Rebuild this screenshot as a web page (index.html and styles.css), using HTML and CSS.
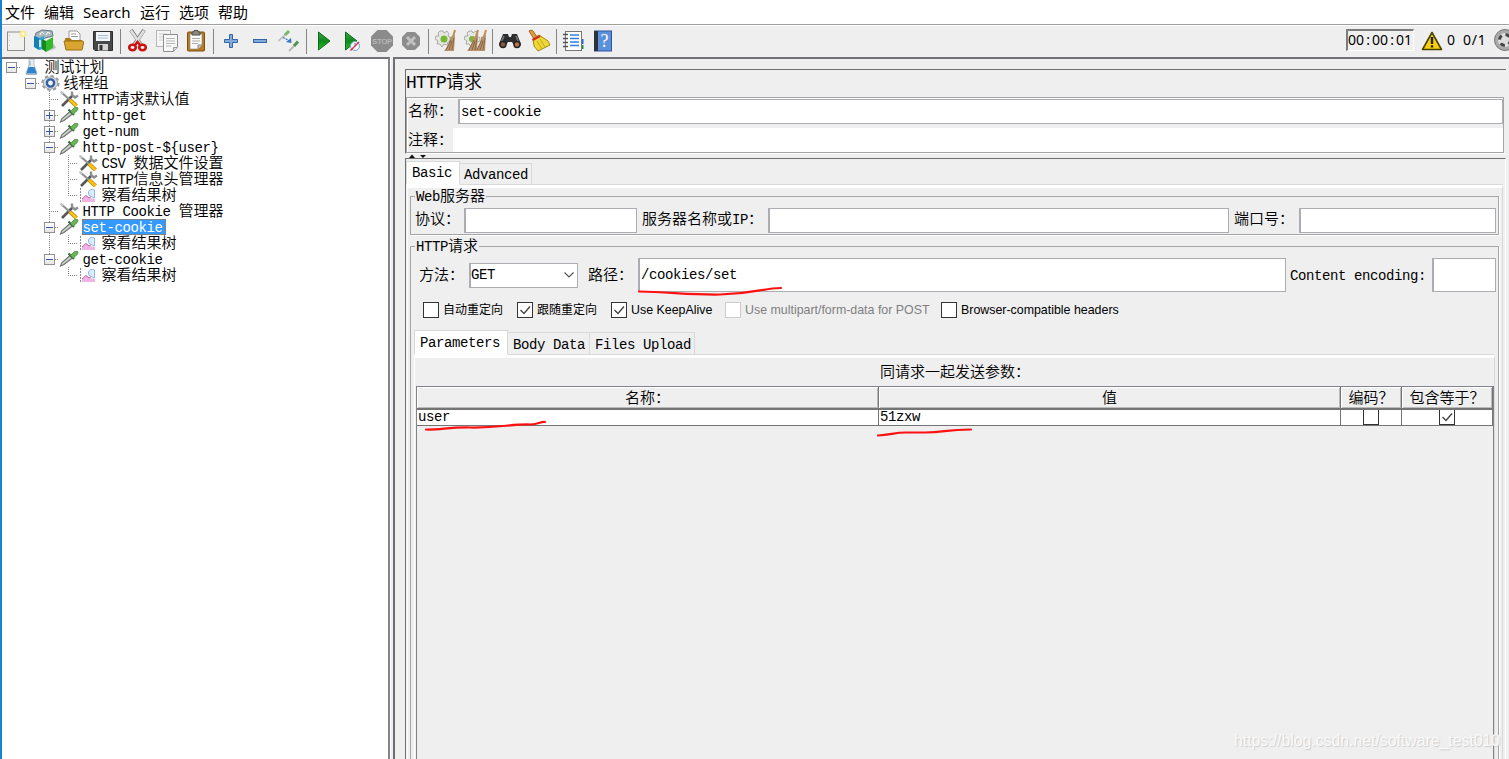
FILE: index.html
```html
<!DOCTYPE html>
<html lang="zh-CN">
<head>
    <meta charset="UTF-8">
    <meta name="viewport" content="width=device-width, initial-scale=1.0">
    <title>Apache JMeter</title>
    <link rel="stylesheet" href="styles.css">
</head>
<body>
    <!-- Shared icons for the tree -->
    <svg class="defs" width="0" height="0">
        <defs>
            <linearGradient id="green" x1="0" y1="0" x2="0" y2="1">
                <stop offset="0" stop-color="#3fa04a"/>
                <stop offset="0.5" stop-color="#0f8a1c"/>
                <stop offset="1" stop-color="#27c025"/>
            </linearGradient>
            <symbol id="dropper" viewBox="0 0 20 16">
                <path d="M1.500 15 L3 11.500 L11 4.500 L13.500 7 L5 13.500 Z" fill="#c9cfcb" stroke="#6d726e" stroke-width="1.1"/>
                <path d="M9.500 2.500 L15 8" stroke="#3d6a3d" stroke-width="2.2"/>
                <path d="M11.500 4.500 L15.500 0.500 Q19 -1 19 2 Q19 3 14 7.500 Z" fill="#6cb35c" stroke="#3f8a3a" stroke-width="0.8"/>
            </symbol>
            <symbol id="tools" viewBox="0 0 20 16">
                <path d="M3 15 L14 4" stroke="#55585a" stroke-width="2.6"/>
                <path d="M13 0.500 L13 4 L16 6.500 L19 4.500" stroke="#8c8f91" stroke-width="2.4" fill="none"/>
                <path d="M2 1 L11 9" stroke="#8e9193" stroke-width="2.2"/>
                <path d="M0.500 0 L5 2 L3 4 Z" fill="#c4c6c7"/>
                <path d="M11 9 L17.500 15" stroke="#b98a00" stroke-width="4"/>
                <path d="M11 9 L17.500 15" stroke="#f6c21b" stroke-width="2.6"/>
            </symbol>
            <symbol id="chart" viewBox="0 0 20 16">
                <path d="M2.500 1 V15" stroke="#8b8b8b" stroke-width="1" stroke-dasharray="2 1"/>
                <path d="M4 15 V12 L8 8 L12 11 L17 12 V15 Z" fill="#f0b4e2"/>
                <path d="M4 12 L8 8.500 L11 11 L13 10" stroke="#c864b4" fill="none"/>
                <path d="M16.500 3 Q12 1 10.500 5 Q10 9 13 9.500 L16.500 11 Z" fill="#dcecff" stroke="#7da5dc" stroke-width="0.8"/>
            </symbol>
            <symbol id="flask" viewBox="0 0 20 16">
                <path d="M8 0 H13 V6 L16 14 Q16 15 15 15 H6 Q5 15 5 14 L8 6 Z" fill="#e5eef5" stroke="#a5b5c2" stroke-width="0.8"/>
                <path d="M7.500 8 H13.500 L15.500 14 H5.500 Z" fill="#2e83cf"/>
                <path d="M9 2 V7" stroke="#7fa6c4"/>
                <path d="M5 15 H16" stroke="#5a89b0"/>
            </symbol>
            <symbol id="gear" viewBox="0 0 20 16">
                <ellipse cx="10.500" cy="8" rx="8" ry="6.800" fill="none" stroke="#9a9fa4" stroke-width="2.400" stroke-dasharray="3.200 2.600"/>
                <ellipse cx="10.500" cy="8" rx="7.200" ry="6.200" fill="#d6d9db" stroke="#93989c" stroke-width="0.8"/>
                <circle cx="10.500" cy="8" r="3.600" fill="#f4f7fa" stroke="#345fa5" stroke-width="2.400"/>
            </symbol>
            <symbol id="broom" viewBox="0 0 12 24">
                <path d="M11 1 L8 11" stroke="#c58b52" stroke-width="2"/>
                <path d="M6 8 L11 6 L10 22 L0 22 Q5 16 6 8 Z" fill="#b8926c"/>
                <path d="M7 11 L2 21 M8 12 L5 21 M10 9 L8 21" stroke="#7f5a38" stroke-width="0.8"/>
            </symbol>
            <symbol id="cog" viewBox="0 0 16 18">
                <path d="M5 1 H8 L9 3 L12 1 L14 4 L13 6 L16 8 V11 L13 12 L12 15 L9 14 L7 17 L5 14 L2 14 L3 11 L0 9 L1 6 L4 6 L3 3 Z" fill="#e6e6e2" stroke="#a3a39e" stroke-width="0.9"/>
            </symbol>
        </defs>
    </svg>

    <div class="window">
        <!-- Menu -->
        <nav class="menubar">
            <span>文件</span><span>编辑</span><span>Search</span><span>运行</span><span>选项</span><span>帮助</span>
        </nav>

        <!-- Toolbar -->
        <div class="toolbar">
            <span class="tool"><svg width="24" height="24" viewBox="0 0 24 24">
                <rect x="3.500" y="3" width="17" height="18.500" fill="#f1f1ef" stroke="#8d8f8a"/>
                <path d="M5.500 6 V20" stroke="#c4c4c4" stroke-dasharray="1 4"/>
                <circle cx="19" cy="5" r="3.500" fill="#f7e98b"/><circle cx="19" cy="5" r="1.500" fill="#fffdf0"/>
            </svg></span>
            <span class="tool"><svg width="24" height="24" viewBox="0 0 24 24">
                <path d="M3 4 L9 1 L19 2 L20 7 L8 10 L2 8 Z" fill="#a9b8bd" stroke="#65777e"/>
                <path d="M7 6 Q8 1 11 5 M13 6 Q15 1 17 5" stroke="#fff" fill="none"/>
                <path d="M1 7 L6 9 V21 L1 18 Z" fill="#1580b5"/>
                <path d="M6 9 L11 7 V20 L6 21 Z" fill="#34a5d8"/>
                <path d="M7 11 V18" stroke="#fff" stroke-width="1.500"/>
                <path d="M9 10 L13 12 V23 L9 20 Z" fill="#138a1e"/>
                <path d="M13 12 L20 8 V19 L13 23 Z" fill="#32ba2b"/>
                <path d="M20 14 L23 19 L14 23 L20 19 Z" fill="#bbb"/>
            </svg></span>
            <span class="tool"><svg width="24" height="24" viewBox="0 0 24 24">
                <path d="M7 2 H15 L18 5 V14 H7 Z" fill="#fff" stroke="#999"/>
                <path d="M9 5 H14 M9 7.500 H16" stroke="#999"/>
                <path d="M3 9 H8 L10 11 H20 V20 H4 Z" fill="#a97a17"/>
                <path d="M2 12 H20 Q22 12 21.500 14 L20 21 H4 Z" fill="#d9a531" stroke="#9c7015"/>
            </svg></span>
            <span class="tool"><svg width="24" height="24" viewBox="0 0 24 24">
                <path d="M2.500 2.500 H21.500 V21.500 H4 L2.500 20 Z" fill="#46484a" stroke="#2c2d2e"/>
                <rect x="5" y="3" width="14" height="9" fill="#f4f7fa"/>
                <path d="M7 6.500 H17 M7 9 H17" stroke="#a9bccf"/>
                <rect x="7" y="15" width="10" height="6.500" fill="#d5d5d5"/>
                <rect x="8.500" y="16" width="3" height="5" fill="#333"/>
            </svg></span>
            <i class="sep"></i>
            <span class="tool"><svg width="24" height="24" viewBox="0 0 24 24">
                <path d="M5 1 L15 16 M18 1 L8 16" stroke="#858585" stroke-width="4"/>
                <path d="M5 1.500 L14.500 15.500 M18 1.500 L8.500 15.500" stroke="#e1e1e1" stroke-width="2.400"/>
                <ellipse cx="6.500" cy="18.500" rx="3.300" ry="2.700" fill="none" stroke="#cc1111" stroke-width="2.600"/>
                <ellipse cx="16.500" cy="18.500" rx="3.300" ry="2.700" fill="none" stroke="#cc1111" stroke-width="2.600"/>
                <path d="M9 16 L11.500 13 L14 16" stroke="#cc1111" stroke-width="2.500" fill="none"/>
            </svg></span>
            <span class="tool"><svg width="24" height="24" viewBox="0 0 24 24">
                <rect x="1.500" y="1.500" width="14" height="16" fill="#f5f5f5" stroke="#b6b6b6"/>
                <path d="M4 5 H12 M4 8 H8 M4 11 H8" stroke="#ccc"/>
                <path d="M8.500 5.500 H22.500 V18 L18.500 22.500 H8.500 Z" fill="#f8f8f8" stroke="#8e8e8e"/>
                <path d="M11 9.500 H20 M11 12 H20 M11 14.500 H20 M11 17 H16" stroke="#b5b5b5"/>
                <path d="M18.500 22 V18.500 H22" fill="#ddd" stroke="#999"/>
            </svg></span>
            <span class="tool"><svg width="24" height="24" viewBox="0 0 24 24">
                <rect x="3.500" y="3" width="17" height="19" rx="1" fill="#b77c22" stroke="#7f500c"/>
                <path d="M6 5 H18 V16 L14 20 H6 Z" fill="#fafafa" stroke="#888" stroke-width="0.6"/>
                <path d="M8 9.500 H16 M8 12 H16 M8 14.500 H14" stroke="#aaa"/>
                <path d="M8 6 V3 H10 V1.500 H14 V3 H16 V6 Z" fill="#8b8c85" stroke="#4f504c"/>
                <path d="M14 20 V16 H18" fill="#ccc" stroke="#888"/>
            </svg></span>
            <i class="sep"></i>
            <span class="tool"><svg width="24" height="24" viewBox="0 0 24 24">
                <path d="M10.500 5.500 H13.500 V10.500 H18.500 V13.500 H13.500 V18.500 H10.500 V13.500 H5.500 V10.500 H10.500 Z" fill="#82abd9" stroke="#3465a4"/>
            </svg></span>
            <span class="tool"><svg width="24" height="24" viewBox="0 0 24 24">
                <rect x="5.500" y="10.500" width="13" height="3" fill="#82abd9" stroke="#3465a4"/>
            </svg></span>
            <span class="tool"><svg width="24" height="24" viewBox="0 0 24 24">
                <path d="M1.500 12 L9 5" stroke="#bfc4bf" stroke-width="1.800"/>
                <path d="M8 6 L12 2" stroke="#79b46d" stroke-width="3"/>
                <path d="M12 22 L18 16" stroke="#b5b9b5" stroke-width="1.800"/>
                <path d="M17 17 L21 12.500" stroke="#559450" stroke-width="3"/>
                <path d="M6 8.500 L11 11" stroke="#3a76c9" stroke-width="1.200" stroke-dasharray="2 1"/>
                <path d="M9 13 L14 9 L14.500 14 Z" fill="#2f75d2"/>
            </svg></span>
            <i class="sep"></i>
            <span class="tool"><svg width="24" height="24" viewBox="0 0 24 24">
                <path d="M6.500 3 L18 12 L6.500 21 Z" fill="url(#green)" stroke="#0c6d18"/>
            </svg></span>
            <span class="tool"><svg width="24" height="24" viewBox="0 0 24 24">
                <path d="M4.500 3 L16 12 L4.500 21 Z" fill="url(#green)" stroke="#0c6d18"/>
                <circle cx="14" cy="17" r="4.500" fill="#f3f7ff" stroke="#7fa3d0"/>
                <path d="M14 14 V17" stroke="#5f86bd"/>
                <path d="M9.500 21.500 L18 13" stroke="#d13a3a" stroke-width="1.400"/>
            </svg></span>
            <span class="tool"><svg width="24" height="24" viewBox="0 0 24 24">
                <path d="M7.500 1 H16.500 L23 7.500 V16.500 L16.500 23 H7.500 L1 16.500 V7.500 Z" fill="#8b8b8b"/>
                <text x="12" y="15" text-anchor="middle" class="stop-text">STOP</text>
            </svg></span>
            <span class="tool"><svg width="24" height="24" viewBox="0 0 24 24">
                <path d="M8 3 H16 L21 8 V16 L16 21 H8 L3 16 V8 Z" fill="#8d8d8d"/>
                <path d="M8 8 L16 16 M16 8 L8 16" stroke="#c0c0c0" stroke-width="3"/>
            </svg></span>
            <i class="sep"></i>
            <span class="tool"><svg width="24" height="24" viewBox="0 0 24 24">
                <use href="#cog" x="1" y="1" width="16" height="18"/>
                <circle cx="10" cy="10" r="3.500" fill="#75b935"/>
                <use href="#broom" x="10" y="0" width="12" height="24"/>
            </svg></span>
            <span class="tool"><svg width="24" height="24" viewBox="0 0 24 24">
                <use href="#cog" x="1" y="1" width="16" height="18"/>
                <circle cx="9" cy="10" r="3" fill="#75b935"/>
                <use href="#broom" x="4" y="0" width="12" height="24"/>
                <use href="#broom" x="12" y="0" width="12" height="24"/>
            </svg></span>
            <i class="sep"></i>
            <span class="tool"><svg width="24" height="24" viewBox="0 0 24 24">
                <path d="M5 5 H10 L11 8 H13 L14 5 H19 L23 15 Q22 20 17 18 L14 13 H10 L7 18 Q2 20 1 15 Z" fill="#2d2e2f"/>
                <path d="M6 7 L3 14 M18 7 L20 12" stroke="#77797b" stroke-width="1.500"/>
                <circle cx="5" cy="15.500" r="3" fill="#865b43" stroke="#222" stroke-width="1.400"/>
                <circle cx="19" cy="15.500" r="3" fill="#b56f45" stroke="#222" stroke-width="1.400"/>
            </svg></span>
            <span class="tool"><svg width="24" height="24" viewBox="0 0 24 24">
                <path d="M2 2 Q4 0 6 2 L10 8 L7 10 Z" fill="#df9c48" stroke="#a96617"/>
                <path d="M6 10 L12 6 L21 12 L23 16 L11 22 L7 17 Z" fill="#edd83a" stroke="#a98a0c"/>
                <path d="M5.500 11 L13 7" stroke="#d02a20" stroke-width="2.400"/>
                <path d="M10 12 L15 20 M13 10 L18 18" stroke="#c5a718"/>
            </svg></span>
            <i class="sep narrow"></i>
            <span class="tool"><svg width="24" height="24" viewBox="0 0 24 24">
                <path d="M20 10 H22.500 V15 H20 Z" fill="#2566cf"/><path d="M20 16 H22.500 V20 H20 Z" fill="#239143"/>
                <rect x="4.500" y="2.500" width="16" height="19" fill="#fff" stroke="#777"/>
                <path d="M2 5.500 H7 M2 9.500 H7 M2 13.500 H7 M2 17.500 H7" stroke="#555" stroke-width="1.500"/>
                <path d="M9 6 H18 M9 9.500 H18 M9 13 H18 M9 16.500 H18" stroke="#2f80df" stroke-width="1.300"/>
            </svg></span>
            <span class="tool"><svg width="24" height="24" viewBox="0 0 24 24">
                <rect x="4.500" y="2" width="17" height="20" fill="#5b90dc" stroke="#2c569b"/>
                <rect x="4" y="2" width="4" height="20" fill="#2c3038"/>
                <text x="14.500" y="18" text-anchor="middle" class="help-text">?</text>
            </svg></span>

            <div class="status">
                <div class="timer">00<b>:</b>00<b>:</b>01</div>
                <svg width="22" height="20" viewBox="0 0 22 20">
                    <path d="M11 1.500 L20.500 18.500 H1.500 Z" fill="#f8cf0a" stroke="#4b4300" stroke-width="1.600" stroke-linejoin="round"/>
                    <path d="M11 6 V13" stroke="#222" stroke-width="2.400"/><rect x="9.800" y="14.300" width="2.400" height="2.200" fill="#222"/>
                </svg>
                <span class="count">0</span>
                <span class="count">0/1</span>
                <svg class="dial" width="24" height="24" viewBox="0 0 24 24">
                    <circle cx="12" cy="12" r="10.500" fill="#aaa" stroke="#777"/>
                    <circle cx="12" cy="12" r="7" fill="#ddd"/>
                    <circle cx="12" cy="12" r="5.500" fill="none" stroke="#444" stroke-width="3" stroke-dasharray="4.600 4"/>
                </svg>
            </div>
        </div>

        <div class="main">
            <!-- Test plan tree -->
            <div class="tree">
                <div class="row"><i class="cell open dash"></i><svg><use href="#flask"/></svg><span>测试计划</span></div>
                <div class="row"><i class="cell"></i><i class="cell open dash"></i><svg><use href="#gear"/></svg><span>线程组</span></div>
                <div class="row"><i class="cell"></i><i class="cell"></i><i class="cell tee"></i><svg><use href="#tools"/></svg><span><em>HTTP</em>请求默认值</span></div>
                <div class="row"><i class="cell"></i><i class="cell"></i><i class="cell tee closed"></i><svg><use href="#dropper"/></svg><span><em>http-get</em></span></div>
                <div class="row"><i class="cell"></i><i class="cell"></i><i class="cell tee closed"></i><svg><use href="#dropper"/></svg><span><em>get-num</em></span></div>
                <div class="row"><i class="cell"></i><i class="cell"></i><i class="cell tee open"></i><svg><use href="#dropper"/></svg><span><em>http-post-${user}</em></span></div>
                <div class="row"><i class="cell"></i><i class="cell"></i><i class="cell line"></i><i class="cell tee"></i><svg><use href="#tools"/></svg><span><em>CSV </em>数据文件设置</span></div>
                <div class="row"><i class="cell"></i><i class="cell"></i><i class="cell line"></i><i class="cell tee"></i><svg><use href="#tools"/></svg><span><em>HTTP</em>信息头管理器</span></div>
                <div class="row"><i class="cell"></i><i class="cell"></i><i class="cell line"></i><i class="cell end"></i><svg><use href="#chart"/></svg><span>察看结果树</span></div>
                <div class="row"><i class="cell"></i><i class="cell"></i><i class="cell tee"></i><svg><use href="#tools"/></svg><span><em>HTTP Cookie </em>管理器</span></div>
                <div class="row"><i class="cell"></i><i class="cell"></i><i class="cell tee open"></i><svg><use href="#dropper"/></svg><span class="selected"><em>set-cookie</em></span></div>
                <div class="row"><i class="cell"></i><i class="cell"></i><i class="cell line"></i><i class="cell end"></i><svg><use href="#chart"/></svg><span>察看结果树</span></div>
                <div class="row"><i class="cell"></i><i class="cell"></i><i class="cell end open"></i><svg><use href="#dropper"/></svg><span><em>get-cookie</em></span></div>
                <div class="row"><i class="cell"></i><i class="cell"></i><i class="cell"></i><i class="cell end"></i><svg><use href="#chart"/></svg><span>察看结果树</span></div>
            </div>

            <!-- Editor -->
            <div class="editor">
                <div class="head">
                    <h1><em>HTTP</em>请求</h1>
                    <div class="names">
                        <div class="line-row name-row"><label>名称：</label><div class="field"><em>set-cookie</em></div></div>
                        <div class="line-row comment-row"><label>注释：</label><div class="field"></div></div>
                    </div>
                </div>
                <div class="divider">
                    <svg width="20" height="4" viewBox="0 0 20 4"><path d="M0 4 L3 0.500 L6 4 Z M11 1 H17 L14 4 Z" fill="#111"/></svg>
                </div>

                <div class="request">
                    <div class="tabs">
                        <div class="tab active basic"><em>Basic</em></div>
                        <div class="tab advanced"><em>Advanced</em></div>
                    </div>
                    <div class="tab-body">
                        <fieldset class="web">
                            <legend><em>Web</em>服务器</legend>
                            <label class="w-protocol">协议：</label><div class="field f-protocol"></div>
                            <label class="w-server">服务器名称或<em>IP</em>：</label><div class="field f-server"></div>
                            <label class="w-port">端口号：</label><div class="field f-port"></div>
                        </fieldset>

                        <fieldset class="http">
                            <legend><em>HTTP</em>请求</legend>
                            <div class="path-row">
                                <label class="w-method">方法：</label>
                                <div class="field combo"><em>GET</em><svg width="12" height="8" viewBox="0 0 12 8"><path d="M1.500 1.500 L6 6 L10.500 1.500" fill="none" stroke="#555" stroke-width="1.200"/></svg></div>
                                <label class="w-path">路径：</label>
                                <div class="field f-path"><em>/cookies/set</em></div>
                                <label class="w-encoding"><em>Content encoding:</em></label>
                                <div class="field f-encoding"></div>
                            </div>
                            <div class="checks">
                                <div class="check c1"><i class="box"></i>自动重定向</div>
                                <div class="check c2"><i class="box"><svg viewBox="0 0 14 14"><path d="M2.500 7 L6 10.500 L12 3.500"/></svg></i>跟随重定向</div>
                                <div class="check c3"><i class="box"><svg viewBox="0 0 14 14"><path d="M2.500 7 L6 10.500 L12 3.500"/></svg></i>Use KeepAlive</div>
                                <div class="check c4 disabled"><i class="box"></i>Use multipart/form-data for POST</div>
                                <div class="check"><i class="box"></i>Browser-compatible headers</div>
                            </div>

                            <div class="tabs inner">
                                <div class="tab active params"><em>Parameters</em></div>
                                <div class="tab data"><em>Body Data</em></div>
                                <div class="tab files"><em>Files Upload</em></div>
                            </div>
                            <div class="param-body">
                                <div class="caption">同请求一起发送参数：</div>
                                <div class="table">
                                    <div class="grid thead">
                                        <div>名称：</div><div>值</div><div>编码？</div><div>包含等于？</div>
                                    </div>
                                    <div class="grid tbody">
                                        <div><em>user</em></div>
                                        <div><em>51zxw</em></div>
                                        <div class="mid"><i class="box"></i></div>
                                        <div class="mid"><i class="box"><svg viewBox="0 0 14 14"><path d="M2.500 7 L6 10.500 L12 3.500"/></svg></i></div>
                                    </div>
                                </div>
                            </div>
                        </fieldset>
                    </div>
                </div>
            </div>
        </div>
    </div>

    <!-- Hand-drawn marks over the form -->
    <svg class="marks" width="1509" height="759" viewBox="0 0 1509 759">
        <path d="M639 291.500 C670 292 690 295 720 294.500 C755 294 762 288 781 288"/>
        <path d="M426 429.500 C440 430 450 427 470 427.500 C500 428 510 424 530 424.500 C540 424 540 421.500 545 422"/>
        <path d="M878 435.500 C890 435 895 432.500 905 432.500 H925 C945 432.500 945 429.500 971 429.500"/>
    </svg>
    <div class="watermark">https://blog.csdn.net/software_test010</div>
</body>
</html>
```
FILE: styles.css
```css
*,
*::before {
    margin: 0;
    padding: 0;
    box-sizing: border-box;
}

body {
    width: 1509px;
    height: 759px;
    overflow: hidden;
    background: #efefef;
    color: #000;
    font: 350 15px/16px "Noto Sans CJK SC", sans-serif;
    white-space: nowrap;
}

/* Latin text, 8px per character */
em {
    font-family: "Liberation Mono", monospace;
    font-style: normal;
    font-size: 14px;
    line-height: 14px;
    letter-spacing: -0.4px;
    white-space: pre;
}

.defs {
    position: absolute;
}

.window {
    display: flex;
    flex-direction: column;
    height: 759px;
    border-left: 2px solid #1a82d2;
}

/* Menu */
.menubar {
    display: flex;
    gap: 9px;
    height: 25px;
    padding: 1px 0 0 3px;
    background: #fff;
    border-bottom: 1px solid #a0a0a0;
    font-family: "Noto Sans", "Noto Sans CJK SC", sans-serif;
    font-weight: 400;
    font-size: 15px;
    line-height: 23px;
}

.menubar span:nth-child(3) {
    width: 48px;
    font-size: 15px;
}

/* Toolbar */
.toolbar {
    display: flex;
    align-items: center;
    height: 32px;
    flex: none;
    border-top: 1px solid #fff;
    padding-bottom: 1px;
}

.tool {
    display: flex;
    justify-content: center;
    width: 29px;
    flex: none;
}

.tool svg {
    margin-left: -1px;
}

.sep {
    width: 6px;
    height: 25px;
    flex: none;
    background: linear-gradient(#858585, #858585) 2px 0 / 1px 100% no-repeat;
}

.sep.narrow {
    width: 5px;
}

.stop-text {
    font: bold 8px/8px "Liberation Sans", sans-serif;
    letter-spacing: -0.4px;
    fill: #b5b5b5;
}

.help-text {
    font: 18px "Liberation Serif", serif;
    fill: #fff;
}

.status {
    display: flex;
    align-items: center;
    width: 163px;
    margin-left: auto;
    flex: none;
    font: 14px/16px "Noto Sans", sans-serif;
}

.status > * {
    flex: none;
}

.timer {
    width: 68px;
    height: 22px;
    margin: -2px 7px 0 0;
    padding: 1px 0 0;
    border: 1px solid #fff;
    border-top: 2px solid #7c7c7c;
    border-left: 2px solid #7c7c7c;
}

.timer b {
    display: inline-block;
    width: 8px;
    font-weight: normal;
    text-align: center;
}

.count {
    margin: -2px 0 0 4px;
}

.count + .count {
    margin-left: 8px;
    letter-spacing: 0.8px;
}

.dial {
    margin-left: 6px;
    margin-top: -2px;
}

.main {
    display: flex;
    flex: 1;
    min-height: 0;
}

/* Tree */
.tree {
    width: 388px;
    flex: none;
    background: #fff;
    border-top: 2px solid #727276;
    border-right: 2px solid #83858d;
    box-shadow: 1px 0 #fff;
}

.row {
    display: flex;
    height: 16px;
}

.row > svg {
    width: 20px;
    height: 16px;
    margin-right: 3px;
    flex: none;
}

.row > span {
    height: 16px;
    line-height: 13px;
    padding-left: 0.5px;
}

.row .selected {
    width: 84px;
    background: #3399ff;
    color: #fff;
    outline: 1px dotted #c46e1e;
    outline-offset: -1px;
}

.cell {
    width: 19px;
    height: 16px;
    flex: none;
    --v: repeating-linear-gradient(#888 0 1px, transparent 1px 2px);
    --h: repeating-linear-gradient(90deg, #888 0 1px, transparent 1px 2px);
    background-repeat: no-repeat;
}

.cell.line {
    background-image: var(--v);
    background-size: 1px 16px;
    background-position: 9px 0;
}

.cell.tee,
.cell.end {
    background-image: var(--v), var(--h);
    background-size: 1px 16px, 10px 1px;
    background-position: 9px 0, 9px 8px;
}

.cell.end {
    background-size: 1px 9px, 10px 1px;
}

.cell.dash {
    background-image: var(--h);
    background-size: 10px 1px;
    background-position: 9px 8px;
}

.cell.open::before,
.cell.closed::before {
    content: "";
    display: block;
    width: 11px;
    height: 11px;
    margin: 3px 0 0 4px;
    border: 1px solid #919191;
    background:
        linear-gradient(#3a55a5, #3a55a5) 1px 4px / 7px 1px no-repeat,
        linear-gradient(#fff, #e6e6e6);
}

.cell.closed::before {
    background:
        linear-gradient(#3a55a5, #3a55a5) 1px 4px / 7px 1px no-repeat,
        linear-gradient(#3a55a5, #3a55a5) 4px 1px / 1px 7px no-repeat,
        linear-gradient(#fff, #e6e6e6);
}

/* Editor */
.editor {
    display: flex;
    flex-direction: column;
    flex: 1;
    margin-left: 3px;
    padding: 10px 3px 0 10px;
    border-top: 2px solid #727276;
    border-left: 2px solid #6f6f73;
}

.head {
    height: 85px;
    flex: none;
    border-top: 1px solid #6e6e6e;
    border-left: 1px solid #6e6e6e;
    border-bottom: 1px solid #fff;
}

h1 {
    height: 27px;
    font-size: 18px;
    font-weight: 350;
    line-height: 20px;
}

h1 em {
    font-size: 18px;
    letter-spacing: -0.8px;
}

.names {
    width: 1098px;
    height: 56px;
    border: 1px solid #a5a5a5;
    box-shadow: inset 1px 1px #fff;
    padding-top: 1px;
}

.line-row {
    display: flex;
    align-items: center;
    height: 25px;
    padding-left: 1px;
}

.line-row label {
    padding-bottom: 3px;
}

.name-row label {
    width: 50px;
}

.comment-row label {
    width: 45px;
}

.field {
    display: flex;
    align-items: center;
    height: 25px;
    padding-left: 1px;
    background: #fff;
    border: 1px solid #abadb3;
    border-left-width: 2px;
}

.line-row .field {
    flex: 1;
}

.comment-row {
    margin-top: 4px;
    height: 24px;
}

.comment-row .field {
    height: 24px;
    border: 0;
}

.divider {
    height: 4px;
    flex: none;
    padding-left: 4px;
}

.divider svg {
    display: block;
}

.request {
    display: flex;
    flex-direction: column;
    flex: 1;
    border-top: 1px solid #6e6e6e;
    border-left: 1px solid #6e6e6e;
    border-right: 1px solid #fff;
    padding: 2px 2px 0 0;
}

.tabs {
    display: flex;
    align-items: flex-end;
    height: 24px;
    flex: none;
    background: linear-gradient(#d9d9d9, #d9d9d9) 0 23px / 100% 1px no-repeat;
}

.tab {
    height: 22px;
    padding-left: 5px;
    line-height: 18px;
    border: 1px solid #d9d9d9;
    border-left: 0;
}

.tab.active {
    height: 24px;
    line-height: 18px;
    background: #fff;
    border-left: 1px solid #d9d9d9;
    border-bottom-color: #fff;
}

.basic {
    width: 54px;
}

.advanced {
    width: 72px;
    padding-left: 4px;
}

.tab-body {
    flex: 1;
    border-top: 3px solid #fff;
    border-left: 2px solid #f8f8f8;
    border-right: 1px solid #d9d9d9;
    padding: 0 3px 0 2px;
}

fieldset {
    border: 1px solid #a5a5a5;
    box-shadow: 1px 1px #fff;
}

legend {
    height: 16px;
    margin-left: 4px;
    padding: 0 1px;
    line-height: 14px;
}

.web {
    display: flex;
    height: 47px;
    padding-top: 4px;
}

.web label {
    padding-top: 2px;
}

.w-protocol {
    width: 53px;
    padding-left: 4px;
}

.f-protocol {
    width: 173px;
}

.w-server {
    width: 131px;
    padding-left: 5px;
}

.f-server {
    width: 461px;
}

.w-port {
    width: 70px;
    padding-left: 5px;
}

.f-port {
    width: 197px;
}

.http {
    height: 530px;
    margin-top: 3px;
    padding-top: 4px;
}

.path-row {
    display: flex;
    align-items: center;
    height: 34px;
}

.path-row label {
    padding-bottom: 2px;
}

.w-method {
    width: 58px;
    padding-left: 8px;
}

.combo {
    width: 109px;
    justify-content: space-between;
    padding: 0 2px 0 0;
}

.w-path {
    width: 60px;
    padding-left: 10px;
}

.f-path {
    width: 648px;
    height: 34px;
}

.w-encoding {
    width: 146px;
    padding-left: 4px;
}

.f-encoding {
    width: 64px;
    height: 34px;
}

.checks {
    display: flex;
    height: 16px;
    margin: 10px 0 12px 12px;
    font: 12.4px/16px "Liberation Sans", "Noto Sans CJK SC", sans-serif;
}

.check {
    display: flex;
    gap: 4px;
}

.c1, .c2 {
    width: 94px;
    font-size: 12px;
}

.c3 {
    width: 114px;
}

.c4 {
    width: 216px;
}

.box {
    width: 16px;
    height: 16px;
    flex: none;
    background: #fff;
    border: 1px solid #333;
}

.box svg {
    display: block;
    width: 14px;
    height: 14px;
    fill: none;
    stroke: #444;
    stroke-width: 1.4;
}

.disabled {
    color: #808080;
}

.disabled .box {
    border-color: #ccc;
}

.tabs.inner {
    height: 25px;
    margin: 0 4px 0 3px;
    background-position: 0 24px;
}

.inner .tab {
    height: 23px;
    line-height: 20px;
}

.inner .tab.active {
    height: 25px;
    line-height: 19px;
}

.params {
    width: 94px;
}

.data {
    width: 82px;
}

.files {
    width: 105px;
}

.param-body {
    width: 1081px;
    height: 420px;
    margin-left: 3px;
    border-top: 3px solid #fff;
    border-left: 1px solid #fff;
    border-right: 1px solid #d9d9d9;
    padding-left: 1px;
}

.caption {
    height: 28px;
    padding-left: 464px;
    line-height: 25px;
}

.table {
    width: 1078px;
    height: 400px;
    border: 1px solid #82838c;
}

.grid {
    display: grid;
    grid-template-columns: 462px 462px 61px 91px;
}

.thead > div {
    height: 23px;
    line-height: 19px;
    text-align: center;
    border-right: 1px solid #747474;
    border-bottom: 2px solid #747474;
    box-shadow: inset 1px 1px #fff, inset -1px -1px #bbb;
}

.tbody > div {
    display: flex;
    height: 16px;
    background: #fff;
    border-right: 1px solid #747474;
    border-bottom: 1px solid #747474;
    padding-left: 1px;
}

.tbody em {
    line-height: 15px;
}

.tbody .mid {
    justify-content: center;
    padding-left: 0;
}

.tbody .mid .box {
    height: 15px;
    border-top: 0;
}

/* Overlays */
.marks {
    position: absolute;
    top: 0;
    left: 0;
    fill: none;
    stroke: #f11;
    stroke-width: 2.2;
    stroke-linecap: round;
    pointer-events: none;
}

.watermark {
    position: absolute;
    left: 1234px;
    top: 732px;
    font: 15.8px/18px "Liberation Sans", sans-serif;
    color: #f9f9f9;
    text-shadow: 1px 1px 1px #ccc;
}
```
